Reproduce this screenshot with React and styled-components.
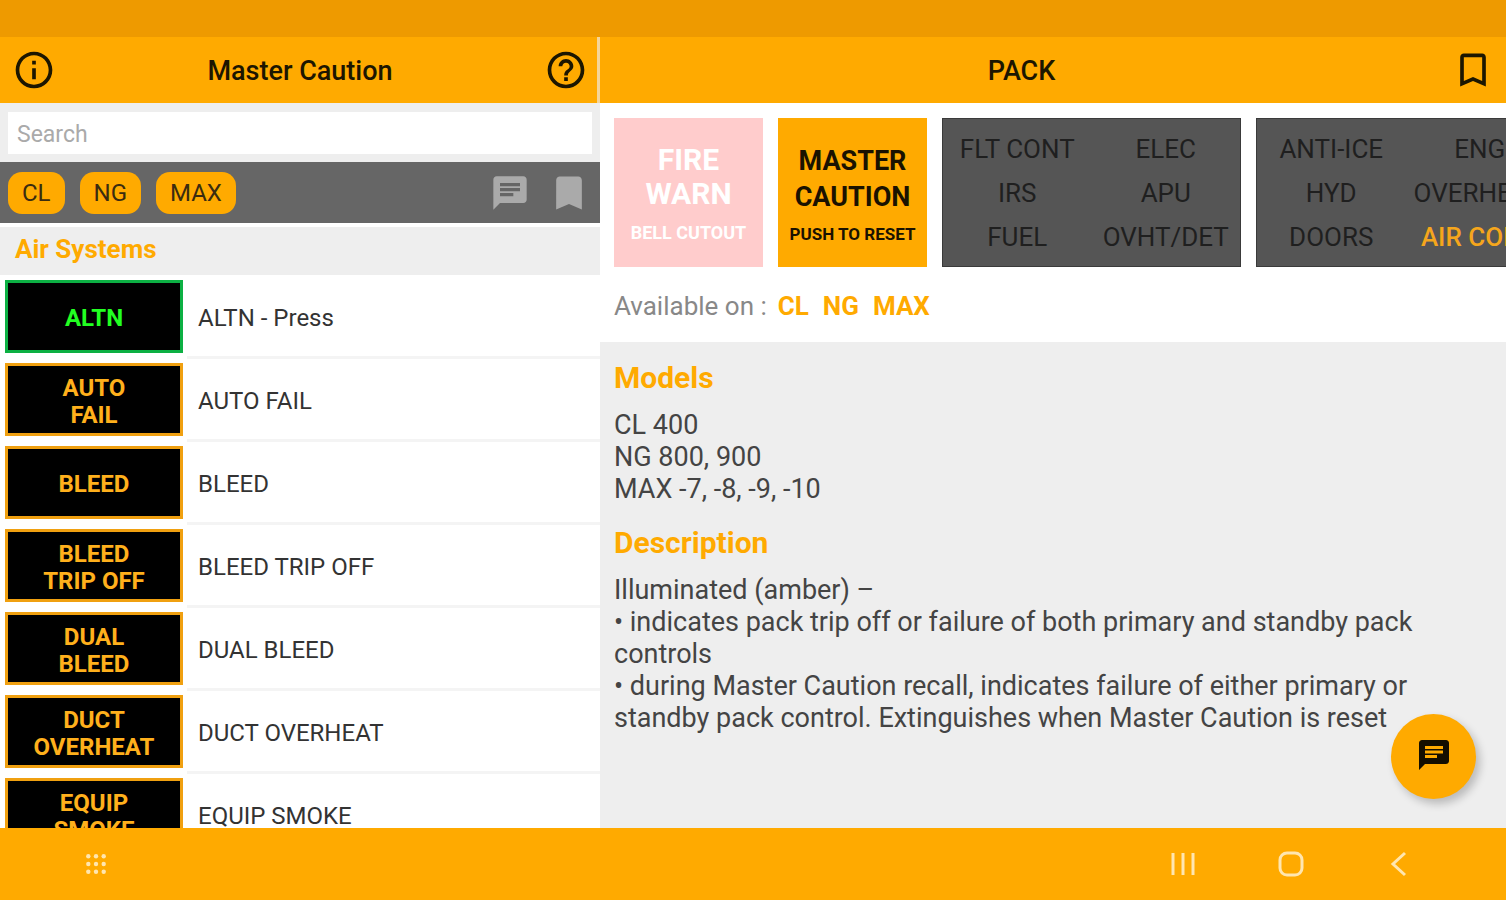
import React from 'react';
import styled, { createGlobalStyle } from 'styled-components';
import { MdInfoOutline, MdHelpOutline, MdBookmarkBorder, MdBookmark, MdChat } from 'react-icons/md';

const amber = '#ffaa00';
const green = '#22ff22';

const GlobalStyle = createGlobalStyle`
  *, *::before, *::after { box-sizing: border-box; }
  body { margin: 0; font-family: Roboto, "Liberation Sans", sans-serif; color: #333; }
  h1, h2, h3, p, ul { margin: 0; padding: 0; }
  button, input { font: inherit; color: inherit; border: 0; margin: 0; padding: 0; }
  button { background: none; cursor: pointer; }
`;

const Shell = styled.div`
  display: flex;
  flex-direction: column;
  height: 100vh;
  overflow: hidden;
`;

const StatusBar = styled.div`
  flex: none;
  height: 37px;
  background: #ee9a00;
`;

const Panes = styled.div`
  flex: 1;
  min-height: 0;
  display: grid;
  grid-template-columns: 600fr 906fr;
`;

const ListPane = styled.aside`
  min-width: 0;
  min-height: 0;
  display: flex;
  flex-direction: column;
  background: #fff;
`;

const DetailPane = styled.main`
  position: relative;
  min-width: 0;
  min-height: 0;
  display: flex;
  flex-direction: column;
  background: #eee;
`;

const Header = styled.header`
  flex: none;
  height: 66px;
  padding: 0 11px 0 0;
  display: flex;
  align-items: center;
  gap: 8px;
  background: ${amber};
  color: #1c1600;
  ${(p) => p.$divided && 'padding: 0 9px 0 12px; border-right: 3px solid #f4d59a;'}
`;

const Title = styled.h1`
  flex: 1;
  padding-top: 2px;
  text-align: center;
  font-size: 27px;
  line-height: 32px;
  font-weight: 500;
`;

const IconButton = styled.button`
  display: flex;
  align-items: center;
  justify-content: center;
  width: 44px;
  height: 44px;
  color: ${(p) => p.$color || 'inherit'};
`;

const SearchBox = styled.div`
  flex: none;
  padding: 9px 8px 8px;
  background: #eee;
`;

const SearchInput = styled.input`
  display: block;
  width: 100%;
  height: 42px;
  padding: 2px 9px 0;
  background: #fff;
  font-size: 23px;
  outline: none;
  &::placeholder { color: #aaa; opacity: 1; }
`;

const FilterBar = styled.div`
  flex: none;
  height: 61px;
  padding: 0 8px;
  display: flex;
  align-items: center;
  gap: 15px;
  background: #666;
`;

const Chip = styled.button`
  height: 42px;
  padding: 0 14px;
  border-radius: 14px;
  background: ${amber};
  color: #3a2c10;
  font-size: 24px;
`;

const FilterTools = styled.div`
  margin-left: auto;
  display: flex;
  gap: 15px;
  padding-right: 1px;
`;

const SectionTitle = styled.h2`
  flex: none;
  margin-top: 4px;
  padding: 0 15px;
  height: 48px;
  line-height: 45px;
  background: #eee;
  color: ${amber};
  font-size: 26px;
  font-weight: 700;
`;

const AlertList = styled.ul`
  flex: 1;
  min-height: 0;
  overflow: hidden;
  list-style: none;
  padding-top: 1px;
`;

const AlertRow = styled.li`
  display: flex;
  height: 83px;
  padding-left: 5px;
`;

const Tile = styled.div`
  flex: none;
  width: 178px;
  height: 73px;
  margin: 4px 4px 0 0;
  padding: 4px 20px 0;
  display: flex;
  align-items: center;
  justify-content: center;
  border: 3px solid ${(p) => (p.$green ? '#0cb043' : '#f0a010')};
  background: #000;
  color: ${(p) => (p.$green ? green : '#ffb01c')};
  font-size: 24px;
  line-height: 27px;
  font-weight: 700;
  text-align: center;
`;

const AlertName = styled.div`
  flex: 1;
  display: flex;
  align-items: center;
  padding: 4px 0 0 11px;
  border-bottom: 3px solid #f4f4f4;
  font-size: 24px;
`;

const Overview = styled.section`
  flex: none;
  height: 239px;
  padding: 15px 0 0 14px;
  background: #fff;
  overflow: hidden;
`;

const Panels = styled.div`
  display: flex;
  gap: 15px;
`;

const LightPanel = styled.div`
  flex: none;
  width: 149px;
  height: 149px;
  padding-top: 5px;
  display: flex;
  flex-direction: column;
  align-items: center;
  justify-content: center;
  gap: ${(p) => (p.$fire ? '8px' : '5px')};
  background: ${(p) => (p.$fire ? '#ffcccc' : amber)};
  color: ${(p) => (p.$fire ? '#fff' : '#1a1200')};
  text-align: center;
  font-size: ${(p) => (p.$fire ? '30px' : '27px')};
  line-height: ${(p) => (p.$fire ? '34px' : '36px')};
  font-weight: 700;
`;

const LightHint = styled.span`
  font-size: ${(p) => (p.$large ? '18px' : '17px')};
  line-height: 28px;
`;

const SystemPanel = styled.div`
  flex: none;
  width: 299px;
  height: 149px;
  padding: 8px 0;
  display: grid;
  grid-template-columns: 1fr 1fr;
  grid-auto-rows: 44px;
  place-items: center;
  border: 1px solid #3a3a3a;
  background: #555;
  color: #1f1f1f;
  font-size: 26px;
`;

const SystemName = styled.span`
  white-space: nowrap;
  ${(p) => p.$lit && `color: #f5a61c; font-weight: 500;`}
`;

const Available = styled.p`
  padding-top: 23px;
  display: flex;
  gap: 11px;
  font-size: 26px;
  line-height: 32px;
  color: #888;
`;

const Variants = styled.span`
  display: flex;
  gap: 14px;
`;

const Variant = styled.b`
  color: ${amber};
  font-size: 26px;
  font-weight: 700;
`;

const Notes = styled.section`
  flex: 1;
  min-height: 0;
  overflow: hidden;
  padding: 20px 80px 0 14px;
`;

const NoteTitle = styled.h3`
  margin-bottom: 15px;
  color: ${amber};
  font-size: 30px;
  line-height: 32px;
  font-weight: 700;
`;

const NoteText = styled.p`
  margin-bottom: 22px;
  color: #444;
  font-size: 27px;
  line-height: 32px;
  white-space: pre-line;
`;

const CommentButton = styled.button`
  position: absolute;
  right: 30px;
  bottom: 29px;
  width: 85px;
  height: 85px;
  padding-bottom: 3px;
  display: flex;
  align-items: center;
  justify-content: center;
  border-radius: 50%;
  background: ${amber};
  color: #140e00;
  box-shadow: 4px 5px 9px rgba(0, 0, 0, 0.22);
`;

const NavBar = styled.nav`
  flex: none;
  height: 72px;
  padding: 0 85px 0 74px;
  display: flex;
  align-items: center;
  justify-content: space-between;
  background: ${amber};
  color: #ffe6b0;
`;

const NavKeys = styled.div`
  display: flex;
  gap: 64px;
`;

const alerts = [
  { tile: 'ALTN', name: 'ALTN - Press', green: true },
  { tile: 'AUTO FAIL', name: 'AUTO FAIL' },
  { tile: 'BLEED', name: 'BLEED' },
  { tile: 'BLEED TRIP OFF', name: 'BLEED TRIP OFF' },
  { tile: 'DUAL BLEED', name: 'DUAL BLEED' },
  { tile: 'DUCT OVERHEAT', name: 'DUCT OVERHEAT' },
  { tile: 'EQUIP SMOKE', name: 'EQUIP SMOKE' },
];

const systems = [
  ['FLT CONT', 'ELEC', 'IRS', 'APU', 'FUEL', 'OVHT/DET'],
  ['ANTI-ICE', 'ENG', 'HYD', 'OVERHEAD', 'DOORS', 'AIR COND'],
];

const models = 'CL 400\nNG 800, 900\nMAX -7, -8, -9, -10';
const description =
  'Illuminated (amber) –\n• indicates pack trip off or failure of both primary and standby pack controls\n• during Master Caution recall, indicates failure of either primary or standby pack control. Extinguishes when Master Caution is reset';

function TileText({ text }) {
  const [first, ...rest] = text.split(' ');
  return (
    <span>
      {first}
      {rest.length > 0 && <br />}
      {rest.join(' ')}
    </span>
  );
}

function AppsIcon() {
  const stops = [3, 10, 17];
  return (
    <svg width="22" height="22" viewBox="0 0 20 20" fill="currentColor" aria-hidden="true">
      {stops.map((y) => stops.map((x) => <circle key={`${x}-${y}`} cx={x} cy={y} r="2" />))}
    </svg>
  );
}

function RecentsIcon() {
  return (
    <svg width="26" height="24" viewBox="0 0 26 24" stroke="currentColor" strokeWidth="3" aria-hidden="true">
      <path d="M3 1v22M13 1v22M23 1v22" />
    </svg>
  );
}

function HomeIcon() {
  return (
    <svg width="28" height="28" viewBox="0 0 28 28" fill="none" stroke="currentColor" strokeWidth="3" aria-hidden="true">
      <rect x="3" y="3" width="22" height="22" rx="7" />
    </svg>
  );
}

function BackIcon() {
  return (
    <svg width="20" height="28" viewBox="0 0 20 28" fill="none" stroke="currentColor" strokeWidth="3" aria-hidden="true">
      <path d="M16 3L4 14l12 11" />
    </svg>
  );
}

export default function App() {
  return (
    <Shell>
      <GlobalStyle />
      <StatusBar />
      <Panes>
        <ListPane>
          <Header $divided>
            <IconButton aria-label="Info"><MdInfoOutline size={44} /></IconButton>
            <Title>Master Caution</Title>
            <IconButton aria-label="Help"><MdHelpOutline size={44} /></IconButton>
          </Header>
          <SearchBox>
            <SearchInput type="text" placeholder="Search" aria-label="Search" />
          </SearchBox>
          <FilterBar>
            <Chip>CL</Chip>
            <Chip>NG</Chip>
            <Chip>MAX</Chip>
            <FilterTools>
              <IconButton $color="#aaa" aria-label="Commented"><MdChat size={40} /></IconButton>
              <IconButton $color="#aaa" aria-label="Bookmarked"><MdBookmark size={46} /></IconButton>
            </FilterTools>
          </FilterBar>
          <SectionTitle>Air Systems</SectionTitle>
          <AlertList>
            {alerts.map((a) => (
              <AlertRow key={a.name}>
                <Tile $green={a.green}><TileText text={a.tile} /></Tile>
                <AlertName>{a.name}</AlertName>
              </AlertRow>
            ))}
          </AlertList>
        </ListPane>
        <DetailPane>
          <Header>
            <Title as="h2">PACK</Title>
            <IconButton aria-label="Bookmark"><MdBookmarkBorder size={44} /></IconButton>
          </Header>
          <Overview>
            <Panels>
              <LightPanel $fire>
                <span>FIRE<br />WARN</span>
                <LightHint $large>BELL CUTOUT</LightHint>
              </LightPanel>
              <LightPanel>
                <span>MASTER<br />CAUTION</span>
                <LightHint>PUSH TO RESET</LightHint>
              </LightPanel>
              {systems.map((names) => (
                <SystemPanel key={names[0]}>
                  {names.map((n) => (
                    <SystemName key={n} $lit={n === 'AIR COND'}>{n}</SystemName>
                  ))}
                </SystemPanel>
              ))}
            </Panels>
            <Available>
              <span>Available on :</span>
              <Variants>
                <Variant>CL</Variant>
                <Variant>NG</Variant>
                <Variant>MAX</Variant>
              </Variants>
            </Available>
          </Overview>
          <Notes>
            <NoteTitle>Models</NoteTitle>
            <NoteText>{models}</NoteText>
            <NoteTitle>Description</NoteTitle>
            <NoteText>{description}</NoteText>
          </Notes>
          <CommentButton aria-label="Add comment"><MdChat size={36} /></CommentButton>
        </DetailPane>
      </Panes>
      <NavBar>
        <IconButton aria-label="Apps"><AppsIcon /></IconButton>
        <NavKeys>
          <IconButton aria-label="Recent apps"><RecentsIcon /></IconButton>
          <IconButton aria-label="Home"><HomeIcon /></IconButton>
          <IconButton aria-label="Back"><BackIcon /></IconButton>
        </NavKeys>
      </NavBar>
    </Shell>
  );
}
